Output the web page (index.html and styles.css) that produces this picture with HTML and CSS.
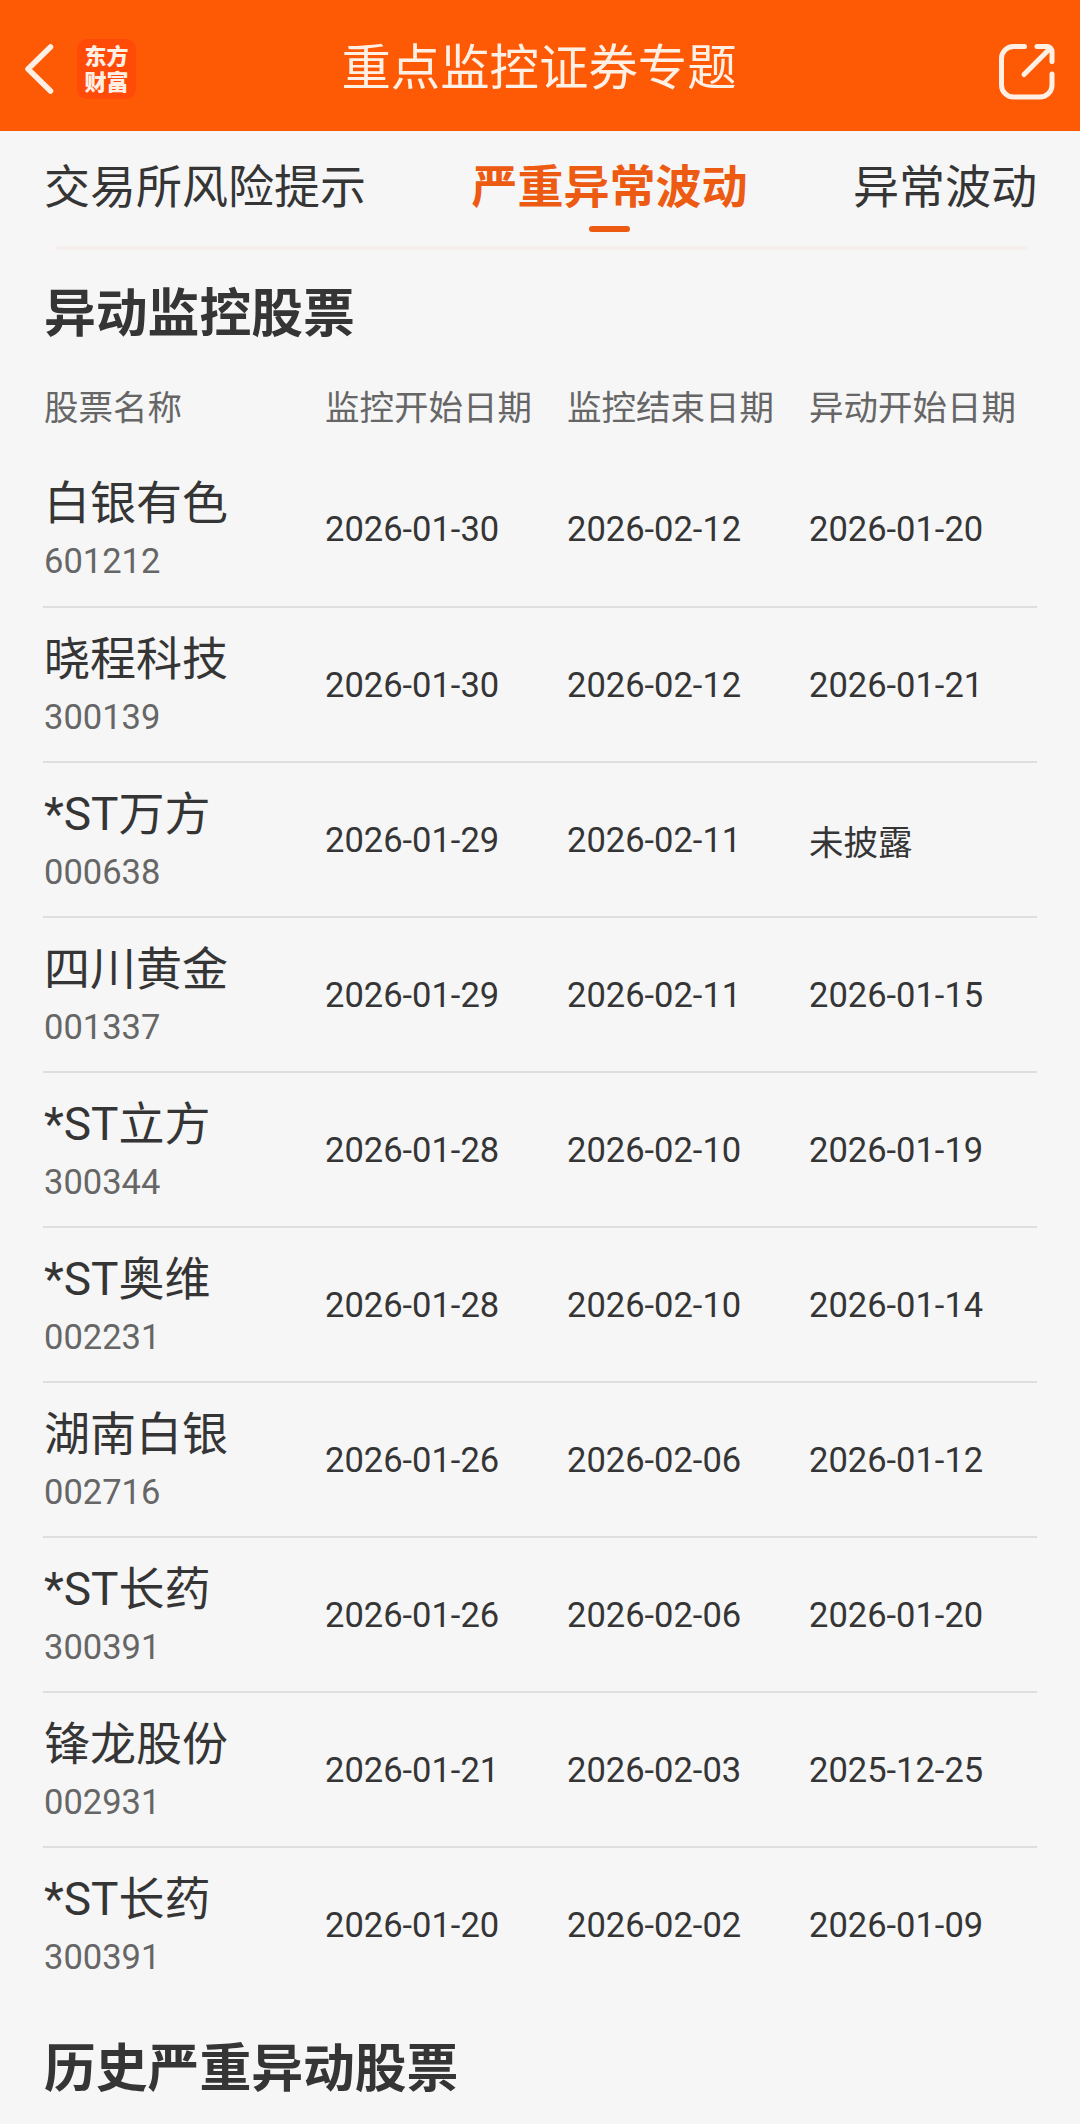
FILE: index.html
```
<!DOCTYPE html>
<html lang="zh-CN">
<head>
  <meta charset="utf-8">
  <title>重点监控证券专题</title>
  <link rel="stylesheet" href="styles.css">
</head>
<body>
  <header class="topbar">
    <div class="left">
      <svg class="back" width="32" height="54" viewBox="0 0 32 54">
        <path d="M28.500 5L6 27L28.500 49" fill="none" stroke="#fff0e6" stroke-width="5.500" stroke-linecap="round" stroke-linejoin="round"/>
      </svg>
      <div class="logo">东方<br>财富</div>
    </div>
    <h1>重点监控证券专题</h1>
    <svg class="share" width="58" height="58" viewBox="0 0 58 58">
      <g fill="none" stroke="#fff0e6" stroke-width="5" stroke-linecap="round" stroke-linejoin="round">
        <path d="M26.500 3.500H15.500A12 12 0 0 0 3.500 15.500V42A12 12 0 0 0 15.500 54H42A12 12 0 0 0 54 42V31"/>
        <path d="M39 3.500H49A5 5 0 0 1 54 8.500V18.500"/>
        <path d="M26 31.500L52 5.500"/>
      </g>
    </svg>
  </header>

  <nav class="tabs">
    <a class="tab">交易所风险提示</a>
    <a class="tab active">严重异常波动</a>
    <a class="tab">异常波动</a>
  </nav>

  <section>
    <h2>异动监控股票</h2>
    <table class="stocks">
      <thead>
        <tr><th class="name">股票名称</th><th class="date">监控开始日期</th><th class="date">监控结束日期</th><th>异动开始日期</th></tr>
      </thead>
      <tbody>
        <tr><td><b>白银有色</b><i>601212</i></td><td>2026-01-30</td><td>2026-02-12</td><td>2026-01-20</td></tr>
        <tr><td><b>晓程科技</b><i>300139</i></td><td>2026-01-30</td><td>2026-02-12</td><td>2026-01-21</td></tr>
        <tr><td><b>*ST万方</b><i>000638</i></td><td>2026-01-29</td><td>2026-02-11</td><td>未披露</td></tr>
        <tr><td><b>四川黄金</b><i>001337</i></td><td>2026-01-29</td><td>2026-02-11</td><td>2026-01-15</td></tr>
        <tr><td><b>*ST立方</b><i>300344</i></td><td>2026-01-28</td><td>2026-02-10</td><td>2026-01-19</td></tr>
        <tr><td><b>*ST奥维</b><i>002231</i></td><td>2026-01-28</td><td>2026-02-10</td><td>2026-01-14</td></tr>
        <tr><td><b>湖南白银</b><i>002716</i></td><td>2026-01-26</td><td>2026-02-06</td><td>2026-01-12</td></tr>
        <tr><td><b>*ST长药</b><i>300391</i></td><td>2026-01-26</td><td>2026-02-06</td><td>2026-01-20</td></tr>
        <tr><td><b>锋龙股份</b><i>002931</i></td><td>2026-01-21</td><td>2026-02-03</td><td>2025-12-25</td></tr>
        <tr><td><b>*ST长药</b><i>300391</i></td><td>2026-01-20</td><td>2026-02-02</td><td>2026-01-09</td></tr>
      </tbody>
    </table>
  </section>

  <section class="history">
    <h2>历史严重异动股票</h2>
  </section>
</body>
</html>
```

FILE: styles.css
```
* {
  box-sizing: border-box;
}
body {
  margin: 0;
  height: 2124px;
  overflow: hidden;
  background-color: #f6f6f6;
  color: #353535;
  font-family: Roboto, "Noto Sans CJK SC", sans-serif;
}
.topbar {
  display: grid;
  grid-template-columns: 1fr auto 1fr;
  align-items: center;
  height: 131px;
  padding: 7px 24px 0 22px;
  background-color: #fe5a06;
  color: #fff0e6;
}
.topbar h1 {
  margin: 0 0 2px;
  font-size: 49.4px;
  font-weight: normal;
  line-height: 70px;
}
.left {
  display: flex;
  align-items: center;
  gap: 23px;
}
.logo {
  width: 59px;
  height: 60px;
  padding-top: 2px;
  border-radius: 10px;
  background-color: #ff4a08;
  font: 900 22px/26px "Noto Sans CJK SC", sans-serif;
  text-align: center;
}
.share {
  justify-self: end;
  margin-top: 6px;
}

.tabs {
  display: flex;
  justify-content: space-between;
  height: 120px;
  padding: 22px 43px 0 44px;
}
.tabs::after {
  content: "";
  position: absolute;
  left: 55px;
  top: 246px;
  width: 973px;
  height: 4px;
  background-color: #f5f0ed;
}
.tab {
  font-size: 46px;
  line-height: 68px;
}
.tab.active {
  color: #ed5a11;
  font-weight: bold;
}
.tab.active::after {
  content: "";
  display: block;
  width: 41px;
  height: 6px;
  margin: 5px auto 0;
  border-radius: 3px;
  background-color: #ed5a11;
}

section {
  padding: 0 43px;
}
h2 {
  margin: 0;
  padding: 25px 1px 19px;
  font-size: 51.8px;
  line-height: 78px;
}
.history h2 {
  padding-top: 28px;
}
.stocks {
  width: 100%;
  table-layout: fixed;
  border-collapse: collapse;
  font-size: 34.5px;
}
th, td {
  padding: 0 0 0 1px;
  text-align: left;
}
th {
  height: 79px;
  padding-bottom: 15px;
  color: #666;
  font-weight: normal;
  white-space: nowrap;
}
th.name {
  width: 281px;
}
th.date {
  width: 242px;
}
td {
  height: 155px;
  border-bottom: 2px solid #dedede;
}
td:first-child {
  padding-bottom: 2px;
}
tr:last-child td {
  border-bottom-color: transparent;
}
td b, td i {
  display: block;
  font-style: normal;
  font-weight: normal;
}
td b {
  font-size: 46px;
  line-height: 66px;
}
td i {
  color: #666;
  line-height: 50px;
}
```
